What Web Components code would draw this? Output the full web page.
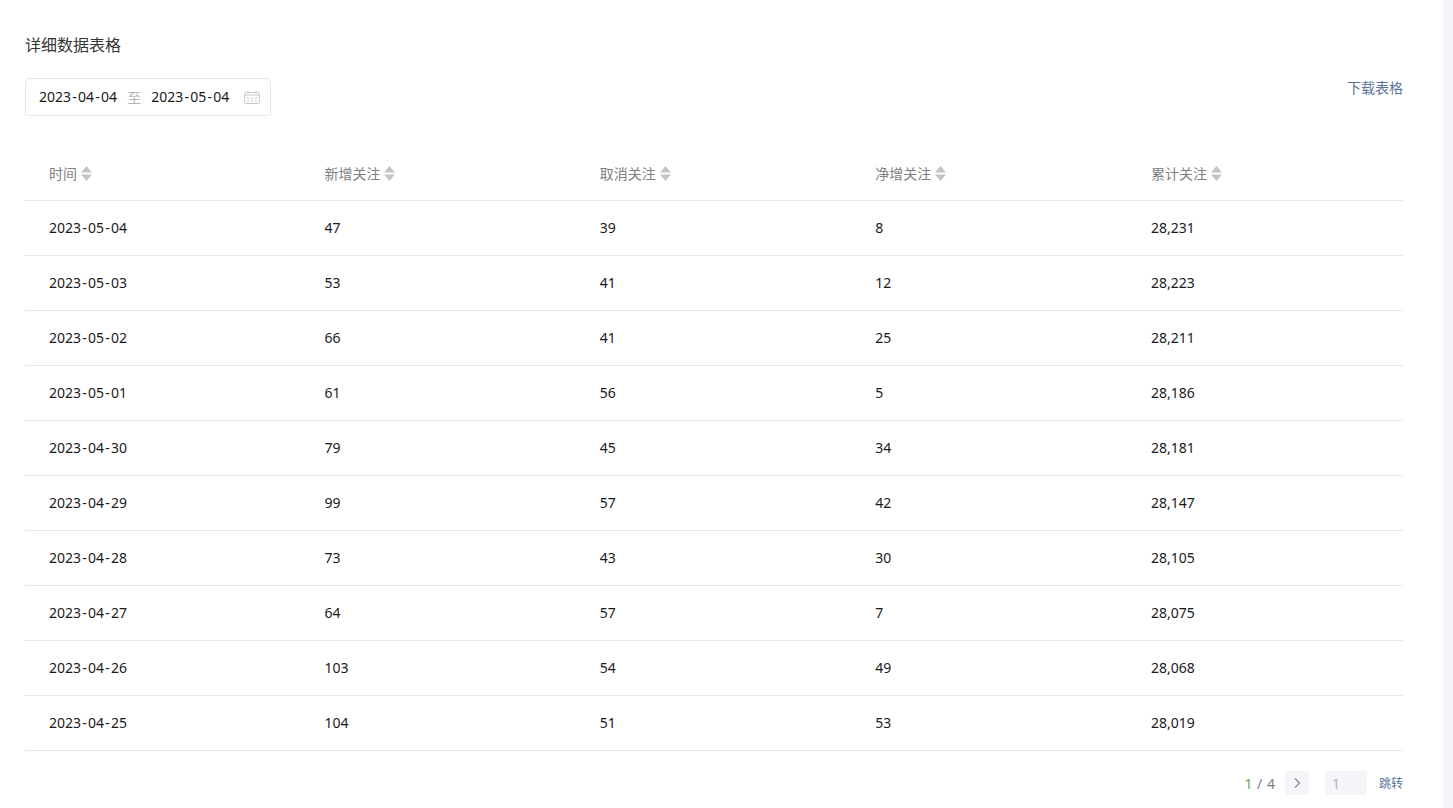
<!DOCTYPE html>
<html lang="zh">
<head>
<meta charset="utf-8">
<title>详细数据表格</title>
<style>
  html, body { margin: 0; height: 100%; overflow: hidden; }
  body {
    background: #f4f5f8;
    font-family: "Noto Sans", "Noto Sans CJK SC", sans-serif;
    font-size: 14px;
    color: #1a1a1a;
  }
</style>
</head>
<body>
<data-panel></data-panel>

<script>
const ROWS = [
  ['2023-05-04', '47', '39', '8', '28,231'],
  ['2023-05-03', '53', '41', '12', '28,223'],
  ['2023-05-02', '66', '41', '25', '28,211'],
  ['2023-05-01', '61', '56', '5', '28,186'],
  ['2023-04-30', '79', '45', '34', '28,181'],
  ['2023-04-29', '99', '57', '42', '28,147'],
  ['2023-04-28', '73', '43', '30', '28,105'],
  ['2023-04-27', '64', '57', '7', '28,075'],
  ['2023-04-26', '103', '54', '49', '28,068'],
  ['2023-04-25', '104', '51', '53', '28,019']
];
const COLUMNS = ['时间', '新增关注', '取消关注', '净增关注', '累计关注'];

// the hyphens of the reference font are wider than those of Noto Sans
const wideHyphens = text => text.replace(/-/g, '<span style="margin:0 1.25px">-</span>');

class DateRange extends HTMLElement {
  constructor() {
    super();
    this.attachShadow({ mode: 'open' });
  }

  connectedCallback() {
    this.shadowRoot.innerHTML = `
      <style>
        :host {
          display: flex;
          align-items: center;
          box-sizing: border-box;
          width: 246px;
          height: 38px;
          padding: 0 10px 0 13px;
          background: #fff;
          border: 1px solid #e6e7eb;
          border-radius: 4px;
          color: #1a1a1a;
        }
        span.d { position: relative; top: -1px; }
        .to { color: #b4b4b4; margin: 0 10px; }
        svg { margin-left: auto; display: block; }
      </style>
      <span class="d">${wideHyphens(this.getAttribute('start'))}</span>
      <span class="to">至</span>
      <span class="d">${wideHyphens(this.getAttribute('end'))}</span>
      <svg width="16" height="13" viewBox="0 0 16 13" fill="none" stroke="#c8c8c8">
        <rect x="0.5" y="1.5" width="15" height="11" rx="1"/>
        <path d="M0.5 4h15M4 0v2M12 0v2"/>
        <path d="M3 7h2M7 7h2M11 7h2M3 10h2M7 10h2M11 10h2"/>
      </svg>
    `;
  }
}

class SortIcon extends HTMLElement {
  constructor() {
    super();
    this.attachShadow({ mode: 'open' });
    this.shadowRoot.innerHTML = `
      <style>
        :host { display: inline-block; width: 11px; height: 15px; margin-left: 4px; }
        svg { display: block; }
      </style>
      <svg width="11" height="15" viewBox="0 0 11 15" fill="#c4c4c4">
        <path d="M5.5 0L11 6.5H0Z"/>
        <path d="M0 8.5H11L5.5 15Z"/>
      </svg>
    `;
  }
}

class DataTable extends HTMLElement {
  constructor() {
    super();
    this.attachShadow({ mode: 'open' });
  }

  connectedCallback() {
    const head = COLUMNS.map(c => `<div class="cell th"><span>${c}</span><sort-icon></sort-icon></div>`).join('');
    const body = ROWS.map(r => `<div class="row">${r.map(v => `<div class="cell"><span class="v">${wideHyphens(v)}</span></div>`).join('')}</div>`).join('');
    this.shadowRoot.innerHTML = `
      <style>
        :host { display: block; }
        .row {
          display: grid;
          grid-template-columns: repeat(3, 275.4px) 275.9px 1fr;
          height: 55px;
          box-sizing: border-box;
          border-bottom: 1px solid #e6e7eb;
          align-items: center;
        }
        .cell { padding-left: 24px; color: #1a1a1a; font-size: 14px; }
        .v { position: relative; top: -1px; }
        .th { display: flex; align-items: center; color: #7e8081; font-size: 14px; }
      </style>
      <div class="row head">${head}</div>
      ${body}
    `;
  }
}

class PagerBar extends HTMLElement {
  constructor() {
    super();
    this.attachShadow({ mode: 'open' });
    this.shadowRoot.innerHTML = `
      <style>
        :host {
          display: flex;
          justify-content: flex-end;
          align-items: center;
          height: 24px;
          font-size: 14px;
          color: #7e8081;
        }
        .count { word-spacing: 1px; }
        .cur { color: #6aa84f; }
        .box {
          box-sizing: border-box;
          height: 24px;
          background: #f4f5f8;
          border-radius: 3px;
          display: flex;
          align-items: center;
        }
        .next { width: 24px; justify-content: center; margin-left: 10px; }
        .next svg { margin-left: 1px; }
        .input { width: 42px; padding-left: 7px; margin-left: 16px; color: #b4b4b4; }
        .go { margin-left: 12px; font-size: 12px; color: #5a7399; }
        svg { display: block; }
      </style>
      <span class="count"><span class="cur">1</span> / 4</span>
      <div class="box next">
        <svg width="7" height="10" viewBox="0 0 7 10" fill="none" stroke="#8a8a8a" stroke-width="1.3">
          <path d="M1 0.5L5.5 5L1 9.5"/>
        </svg>
      </div>
      <div class="box input">1</div>
      <span class="go">跳转</span>
    `;
  }
}

class DataPanel extends HTMLElement {
  constructor() {
    super();
    this.attachShadow({ mode: 'open' });
    this.shadowRoot.innerHTML = `
      <style>
        :host {
          display: block;
          box-sizing: border-box;
          width: 1443px;
          height: 808px;
          padding: 35px 40px 0 25px;
          background: #fff;
        }
        h2 { margin: 0; font-size: 16px; font-weight: 400; line-height: 21px; color: #353535; }
        .bar {
          display: flex;
          justify-content: space-between;
          align-items: flex-start;
          margin-top: 22px;
        }
        .dl { font-size: 14px; line-height: 20px; color: #5a7399; }
        data-table { margin-top: 30px; }
        pager-bar { margin-top: 20px; }
      </style>
      <h2>详细数据表格</h2>
      <div class="bar">
        <date-range start="2023-04-04" end="2023-05-04"></date-range>
        <span class="dl">下载表格</span>
      </div>
      <data-table></data-table>
      <pager-bar></pager-bar>
    `;
  }
}

customElements.define('date-range', DateRange);
customElements.define('sort-icon', SortIcon);
customElements.define('data-table', DataTable);
customElements.define('pager-bar', PagerBar);
customElements.define('data-panel', DataPanel);
</script>
</body>
</html>
